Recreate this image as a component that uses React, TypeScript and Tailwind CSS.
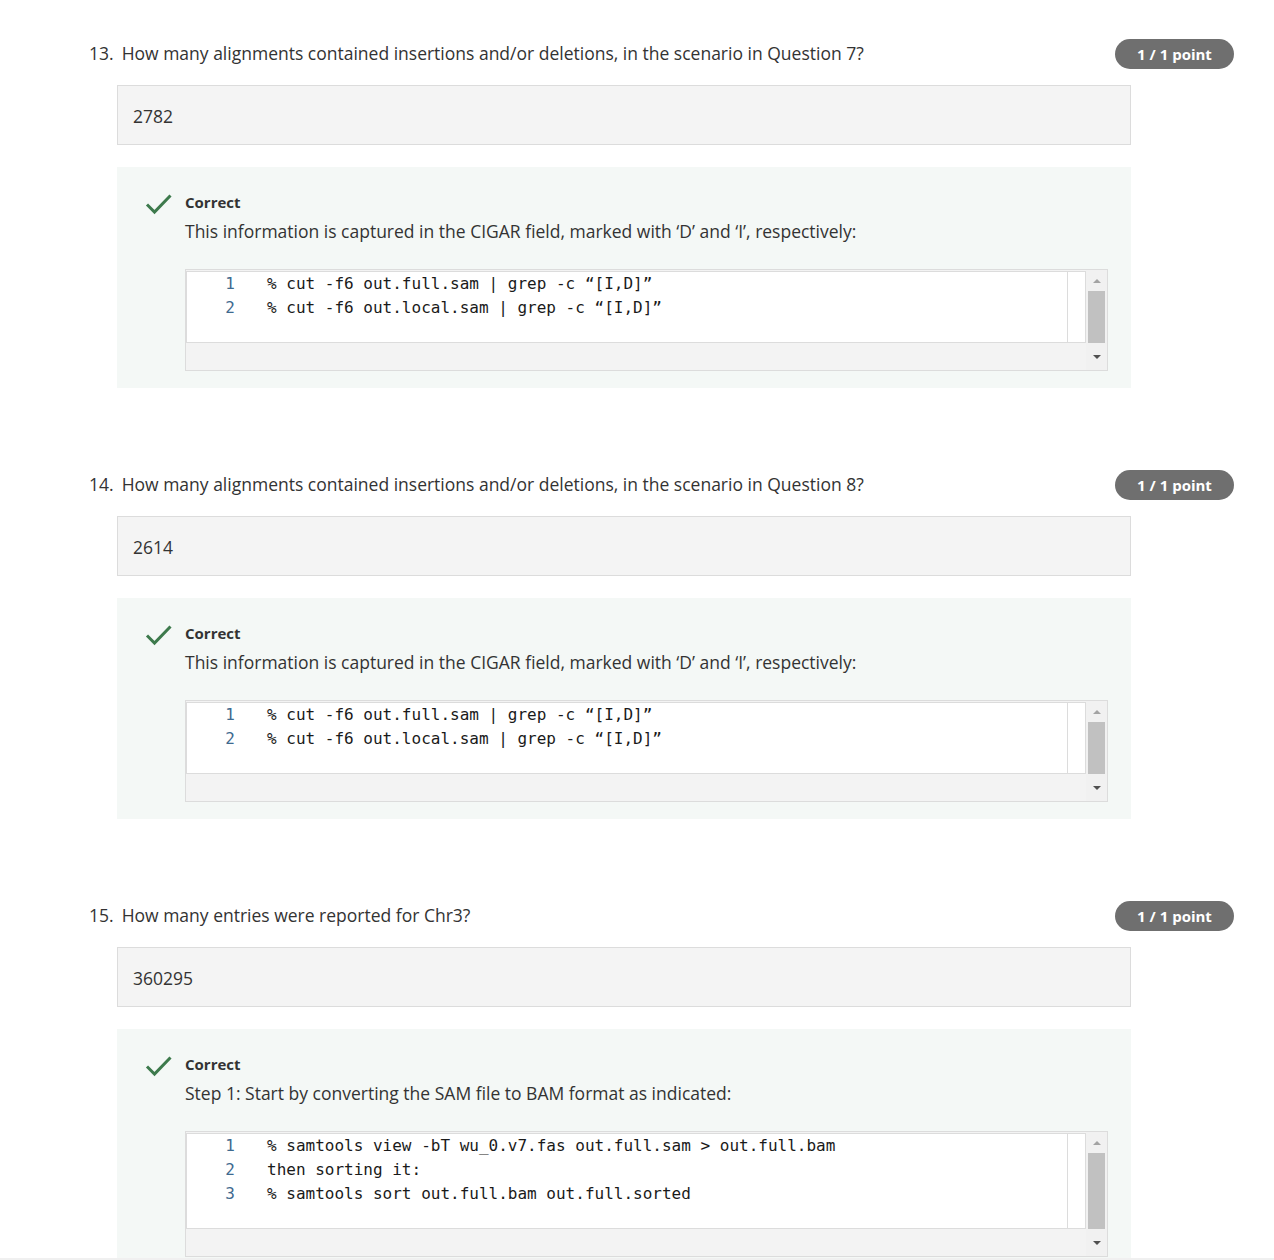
import React from 'react';

type Item = {
  num: number;
  question: string;
  answer: string;
  explanation: string;
  code: string[];
};

const items: Item[] = [
  {
    num: 13,
    question: 'How many alignments contained insertions and/or deletions, in the scenario in Question 7?',
    answer: '2782',
    explanation: 'This information is captured in the CIGAR field, marked with \u2018D\u2019 and \u2018I\u2019, respectively:',
    code: ['% cut -f6 out.full.sam | grep -c \u201c[I,D]\u201d', '% cut -f6 out.local.sam | grep -c \u201c[I,D]\u201d'],
  },
  {
    num: 14,
    question: 'How many alignments contained insertions and/or deletions, in the scenario in Question 8?',
    answer: '2614',
    explanation: 'This information is captured in the CIGAR field, marked with \u2018D\u2019 and \u2018I\u2019, respectively:',
    code: ['% cut -f6 out.full.sam | grep -c \u201c[I,D]\u201d', '% cut -f6 out.local.sam | grep -c \u201c[I,D]\u201d'],
  },
  {
    num: 15,
    question: 'How many entries were reported for Chr3?',
    answer: '360295',
    explanation: 'Step 1: Start by converting the SAM file to BAM format as indicated:',
    code: [
      '% samtools view -bT wu_0.v7.fas out.full.sam > out.full.bam',
      'then sorting it:',
      '% samtools sort out.full.bam out.full.sorted',
    ],
  },
];

function Check() {
  return (
    <svg width="28" height="22" viewBox="0 0 28 22" className="shrink-0">
      <path d="M2 11.5 L9.5 19 L25.5 2.5" fill="none" stroke="#3d7a4c" strokeWidth="3" />
    </svg>
  );
}

function CodeBox({ lines }: { lines: string[] }) {
  return (
    <div className="flex border border-[#dcdcdc] bg-[#f3f3f3]">
      <div className="flex-1 flex flex-col pt-px">
        <div className="flex bg-white border border-[#dcdcdc]">
          <div className="flex-1 pb-[22px] font-['DejaVu_Sans_Mono',monospace] text-[16px] leading-[24px]">
            {lines.map((l, i) => (
              <div key={i} className="flex">
                <span className="w-[48px] text-right text-[#3f6a8f]">{i + 1}</span>
                <span className="ml-[32px] text-[#1a1a1a] whitespace-pre">{l}</span>
              </div>
            ))}
          </div>
          <div className="w-[18px] border-l border-[#dcdcdc]" />
        </div>
        <div className="h-[27px]" />
      </div>
      {/* scrollbar */}
      <div className="w-[21px] bg-[#f1f1f1] flex flex-col items-center">
        <div className="h-[21px] flex items-center justify-center">
          <div className="w-0 h-0 border-l-[4px] border-r-[4px] border-b-[4px] border-l-transparent border-r-transparent border-b-[#a3a3a3]" />
        </div>
        <div className="flex-1 w-[17px] bg-[#c1c1c1]" />
        <div className="h-[27px] flex items-center justify-center">
          <div className="w-0 h-0 border-l-[4px] border-r-[4px] border-t-[4px] border-l-transparent border-r-transparent border-t-[#505050]" />
        </div>
      </div>
    </div>
  );
}

export default function App() {
  return (
    <div className="h-[1260px] overflow-hidden bg-white relative font-['Open_Sans',sans-serif] text-[#333]">
      <div className="pt-[39px]">
        {items.map(it => (
          <div key={it.num} className="mb-[82px]">
            <div className="flex items-start justify-between pl-[89px] pr-[40px]">
              <div className="text-[17.5px] leading-[26px] pt-px">
                <span>{it.num}.</span>
                <span className="ml-[8px]">{it.question}</span>
              </div>
              <div className="h-[30px] w-[119px] rounded-full bg-[#6f6f6f] text-white text-[15px] font-bold flex items-center justify-center">
                1 / 1 point
              </div>
            </div>

            <div className="ml-[117px] w-[1014px] mt-[16px]">
              <div className="h-[60px] bg-[#f4f4f4] border border-[#dcdcdc] flex items-center px-[15px] pt-[2px] text-[17.5px]">
                {it.answer}
              </div>

              <div className="mt-[22px] bg-[#f4f8f6] pt-[24px] pb-[17px] pl-[28px] pr-[23px]">
                <div className="flex gap-[12px]">
                  <div className="pt-[2px]">
                    <Check />
                  </div>
                  <div className="flex-1">
                    <div className="text-[15px] font-bold leading-[22px]">Correct</div>
                    <div className="text-[17.5px] leading-[26px] mt-[5px]">{it.explanation}</div>
                    <div className="mt-[25px]">
                      <CodeBox lines={it.code} />
                    </div>
                  </div>
                </div>
              </div>
            </div>
          </div>
        ))}
      </div>
      <div className="absolute left-0 right-0 bottom-0 h-[2px] bg-[#f0f0f0]" />
    </div>
  );
}
